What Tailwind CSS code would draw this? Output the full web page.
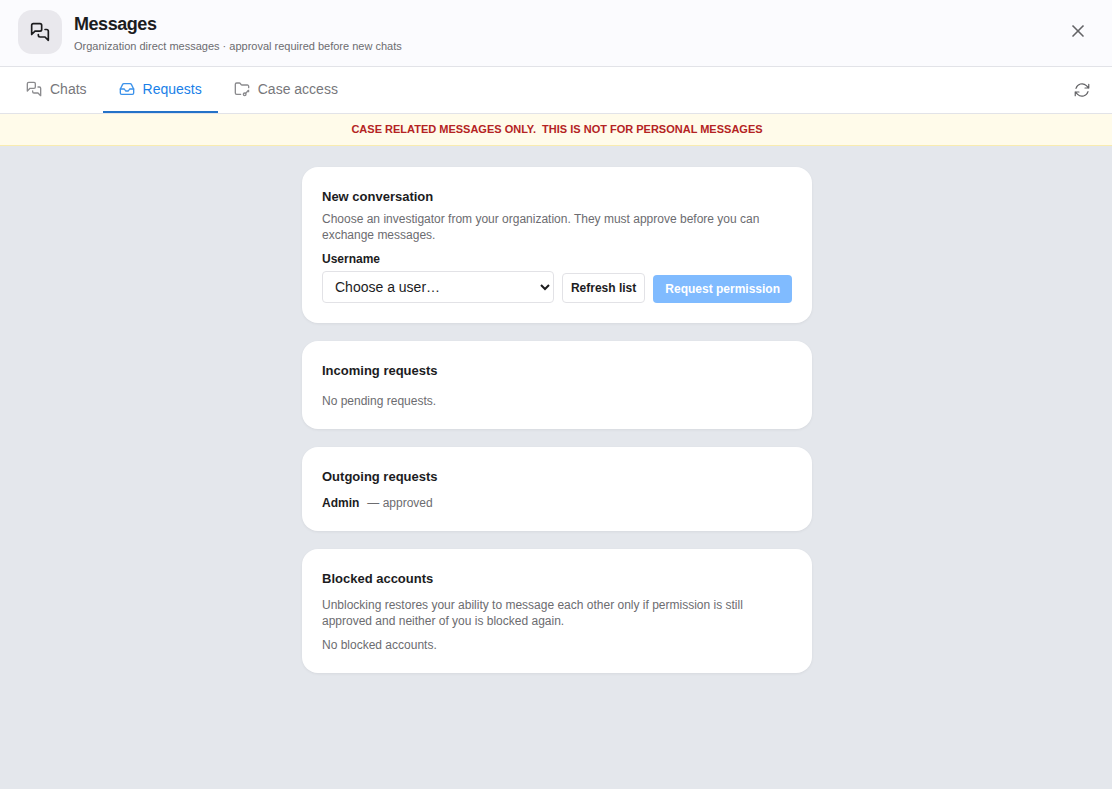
<!DOCTYPE html>
<html lang="en">
<head>
<meta charset="utf-8">
<meta name="viewport" content="width=device-width, initial-scale=1">
<title>Messages</title>
<script src="https://cdn.jsdelivr.net/npm/@tailwindcss/browser@4"></script>
</head>
<body class="flex min-h-screen flex-col bg-[#e4e7ec] font-['Liberation_Sans',Arial,sans-serif] text-xs leading-4 text-[#1c1c1e]">
  <header class="flex h-[67px] shrink-0 items-center gap-3 border-b border-[#e2e3e8] bg-[#fbfbfe] pr-6 pl-[18px] pb-0.5">
    <div class="flex size-11 items-center justify-center rounded-[14px] bg-[#e9e8ed]">
      <svg class="size-5" viewBox="0 0 24 24" fill="none" stroke="currentColor" stroke-width="2" stroke-linecap="round" stroke-linejoin="round" aria-hidden="true"><path d="M14 9a2 2 0 0 1-2 2H6l-4 4V4a2 2 0 0 1 2-2h8a2 2 0 0 1 2 2z"/><path d="M18 9h2a2 2 0 0 1 2 2v11l-4-4h-6a2 2 0 0 1-2-2v-1"/></svg>
    </div>
    <div class="flex flex-1 flex-col gap-1 pt-1">
      <h1 class="text-lg leading-5 font-bold tracking-tight">Messages</h1>
      <p class="text-[11px] leading-4 text-[#6c6c70]">Organization direct messages · approval required before new chats</p>
    </div>
    <button type="button" aria-label="Close" class="pb-0.5 text-[#636366]">
      <svg class="size-5" viewBox="0 0 24 24" fill="none" stroke="currentColor" stroke-width="2" stroke-linecap="round" stroke-linejoin="round" aria-hidden="true"><path d="M18 6 6 18"/><path d="m6 6 12 12"/></svg>
    </button>
  </header>

  <nav class="flex h-[47px] shrink-0 items-stretch border-b border-[#e2e3e8] bg-white pr-[21px] pl-[10px] text-sm leading-5 text-[#77777b]">
    <button type="button" class="flex items-center gap-2 border-b-2 border-transparent px-4">
      <svg class="size-4 opacity-85" viewBox="0 0 24 24" fill="none" stroke="currentColor" stroke-width="2" stroke-linecap="round" stroke-linejoin="round" aria-hidden="true"><path d="M14 9a2 2 0 0 1-2 2H6l-4 4V4a2 2 0 0 1 2-2h8a2 2 0 0 1 2 2z"/><path d="M18 9h2a2 2 0 0 1 2 2v11l-4-4h-6a2 2 0 0 1-2-2v-1"/></svg>
      Chats
    </button>
    <button type="button" aria-current="page" class="flex items-center gap-2 border-b-2 border-[#2472c8] px-4 text-[#1a7fe8]">
      <svg class="size-4 opacity-85" viewBox="0 0 24 24" fill="none" stroke="currentColor" stroke-width="2" stroke-linecap="round" stroke-linejoin="round" aria-hidden="true"><path d="M22 12h-6l-2 3h-4l-2-3H2"/><path d="M5.45 5.11 2 12v6a2 2 0 0 0 2 2h16a2 2 0 0 0 2-2v-6l-3.45-6.89A2 2 0 0 0 16.76 4H7.24a2 2 0 0 0-1.79 1.11z"/></svg>
      Requests
    </button>
    <button type="button" class="flex items-center gap-2 border-b-2 border-transparent px-4">
      <svg class="size-4 opacity-85" viewBox="0 0 24 24" fill="none" stroke="currentColor" stroke-width="2" stroke-linecap="round" stroke-linejoin="round" aria-hidden="true"><circle cx="16" cy="20" r="2"/><path d="M10 20H4a2 2 0 0 1-2-2V5a2 2 0 0 1 2-2h3.9a2 2 0 0 1 1.69.9l.81 1.2a2 2 0 0 0 1.67.9H20a2 2 0 0 1 2 2v2"/><path d="m22 14-4.5 4.5"/><path d="m21 15 1 1"/></svg>
      Case access
    </button>
    <button type="button" aria-label="Refresh" class="ml-auto text-[#636366]">
      <svg class="size-[18px]" viewBox="0 0 24 24" fill="none" stroke="currentColor" stroke-width="1.6" stroke-linecap="round" stroke-linejoin="round" aria-hidden="true"><path d="M16.023 9.348h4.992v-.001M2.985 19.644v-4.992m0 0h4.992m-4.993 0 3.181 3.183a8.25 8.25 0 0 0 13.803-3.7M4.031 9.865a8.25 8.25 0 0 1 13.803-3.7l3.181 3.182m0-4.991v4.99"/></svg>
    </button>
  </nav>

  <p class="border-b border-[#f9ecb0] bg-[#fffbea] py-[7px] pb-2 pl-0.5 text-center text-[11px] leading-4 font-bold text-[#b42323] uppercase">Case related messages only.&nbsp; This is not for personal messages</p>

  <main class="flex-1 py-[21px] pl-0.5">
    <div class="mx-auto flex max-w-[510px] flex-col gap-[18px]">
      <section class="rounded-2xl bg-white p-5 shadow-[0_1px_3px_rgba(0,0,0,0.06)]">
        <h2 class="text-[13px] leading-5 font-bold">New conversation</h2>
        <p class="mt-1 text-[#6c6c70]">Choose an investigator from your organization. They must approve before you can exchange messages.</p>
        <label for="username" class="mt-2 block font-bold">Username</label>
        <div class="mt-1 flex items-end gap-2">
          <select id="username" class="h-8 min-w-0 flex-1 rounded border border-[#e2e2e6] bg-white pl-2 text-sm">
            <option>Choose a user…</option>
          </select>
          <button type="button" class="h-[30px] rounded border border-[#e2e2e6] bg-white px-2 font-bold">Refresh list</button>
          <button type="button" disabled class="h-7 rounded bg-[#80bbff] px-3 font-bold text-white">Request permission</button>
        </div>
      </section>

      <section class="rounded-2xl bg-white p-5 shadow-[0_1px_3px_rgba(0,0,0,0.06)]">
        <h2 class="text-[13px] leading-5 font-bold">Incoming requests</h2>
        <p class="mt-3 text-[#6c6c70]">No pending requests.</p>
      </section>

      <section class="rounded-2xl bg-white p-5 shadow-[0_1px_3px_rgba(0,0,0,0.06)]">
        <h2 class="text-[13px] leading-5 font-bold">Outgoing requests</h2>
        <p class="mt-2 flex gap-2"><strong>Admin</strong><span class="text-[#6c6c70]">— approved</span></p>
      </section>

      <section class="rounded-2xl bg-white p-5 shadow-[0_1px_3px_rgba(0,0,0,0.06)]">
        <h2 class="text-[13px] leading-5 font-bold">Blocked accounts</h2>
        <p class="mt-2 text-[#6c6c70]">Unblocking restores your ability to message each other only if permission is still approved and neither of you is blocked again.</p>
        <p class="mt-2 text-[#6c6c70]">No blocked accounts.</p>
      </section>
    </div>
  </main>
</body>
</html>
